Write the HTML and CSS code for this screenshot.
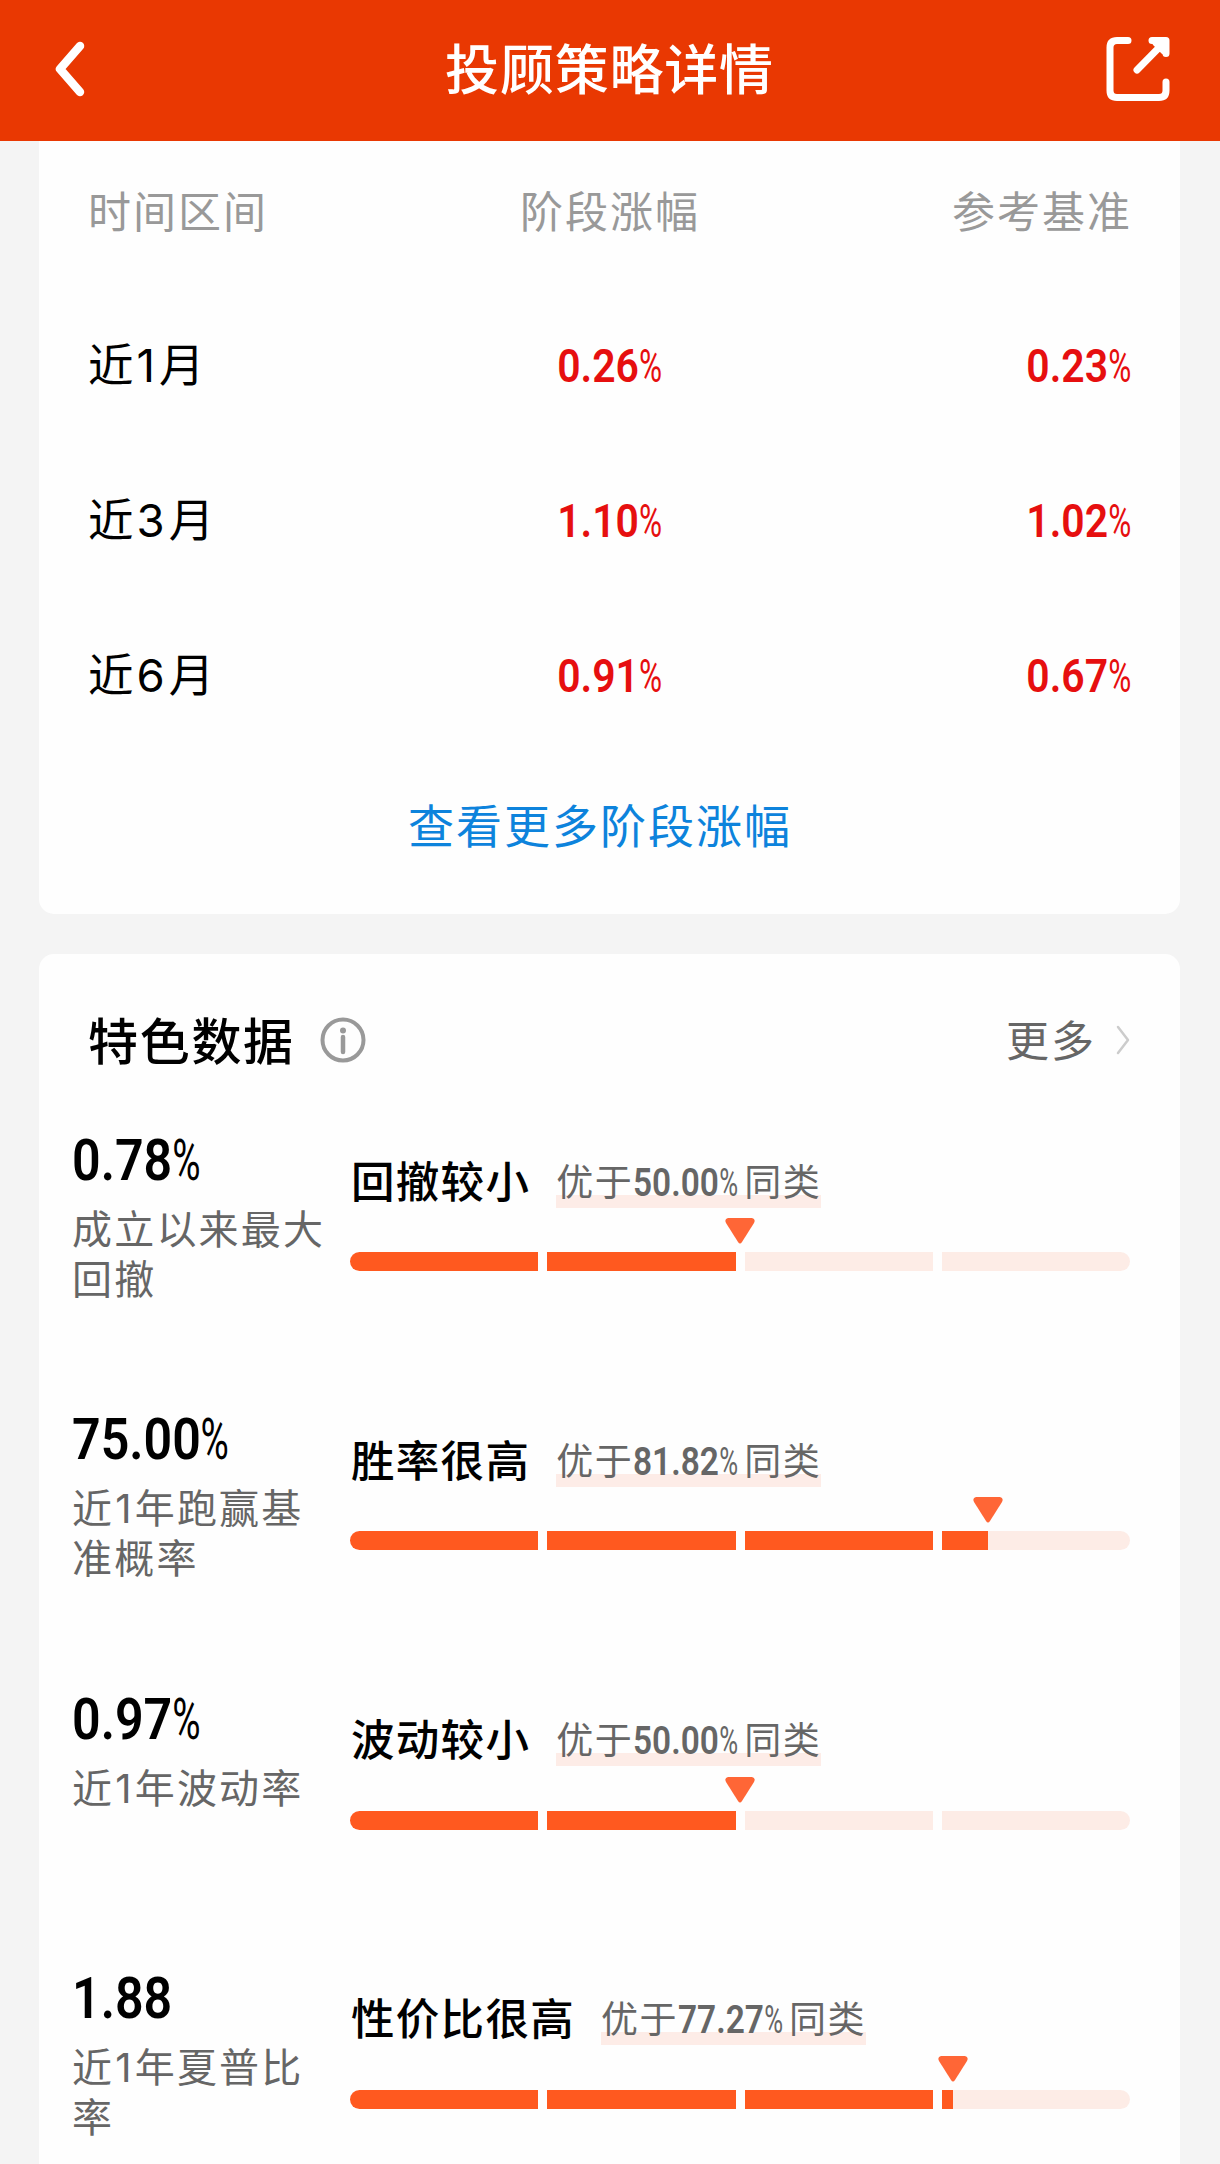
FILE: index.html
```html
<!DOCTYPE html>
<html lang="zh-CN">
<head>
<meta charset="utf-8">
<title>投顾策略详情</title>
<link rel="stylesheet" href="styles.css">
</head>
<body>
<header class="topbar">
  <svg class="back" width="34" height="60" viewBox="0 0 34 60"><path d="M28 7 8 30l20 23"/></svg>
  <h1 class="topbar-title">投顾策略详情</h1>
  <svg class="share" width="68" height="68" viewBox="0 0 68 68"><path d="M24 5.500H13q-7 0-7 7v43q0 7 7 7h42q7 0 7-7V47M48 5.500h14v13M60 7.500 33 35M52 8l8 8"/></svg>
</header>
<main>
  <section class="card returns">
    <div class="row head"><span>时间区间</span><span>阶段涨幅</span><span>参考基准</span></div>
    <div class="row"><span>近<i>1</i>月</span><span><b class="num">0.26<em>%</em></b></span><span><b class="num">0.23<em>%</em></b></span></div>
    <div class="row"><span>近<i>3</i>月</span><span><b class="num">1.10<em>%</em></b></span><span><b class="num">1.02<em>%</em></b></span></div>
    <div class="row"><span>近<i>6</i>月</span><span><b class="num">0.91<em>%</em></b></span><span><b class="num">0.67<em>%</em></b></span></div>
    <a class="more-link">查看更多阶段涨幅</a>
  </section>
  <section class="card features">
    <div class="section-head">
      <h2>特色数据</h2>
      <svg class="info" width="46" height="46" viewBox="0 0 46 46"><circle class="ring" cx="23" cy="23" r="20.5"/><circle class="dot" cx="23" cy="13.5" r="3"/><path d="M23 20v15"/></svg>
      <span class="more">更多</span>
      <svg class="chevron" width="16" height="32" viewBox="0 0 16 32"><path d="m3 3 10 13L3 29"/></svg>
    </div>
    <div class="metric">
      <div class="figure"><b class="num">0.78<em>%</em></b><p>成立以来最大回撤</p></div>
      <div class="rating">
        <div class="verdict"><h3>回撤较小</h3><span class="tag">优于<span class="tag-num"><b class="num">50.00<em>%</em></b></span>同类</span></div>
        <div class="bar"><svg class="marker" style="left:50%" width="30" height="26" viewBox="0 0 30 26"><path d="M3 0h24q4 1 2 5L17 24q-2 3-4 0L1 5Q-1 1 3 0Z"/></svg>
          <span><u style="width:100%"></u></span><span><u style="width:100%"></u></span><span></span><span></span></div>
      </div>
    </div>
    <div class="metric">
      <div class="figure"><b class="num">75.00<em>%</em></b><p>近<i>1</i>年跑赢基准概率</p></div>
      <div class="rating">
        <div class="verdict"><h3>胜率很高</h3><span class="tag">优于<span class="tag-num"><b class="num">81.82<em>%</em></b></span>同类</span></div>
        <div class="bar"><svg class="marker" style="left:81.82%" width="30" height="26" viewBox="0 0 30 26"><path d="M3 0h24q4 1 2 5L17 24q-2 3-4 0L1 5Q-1 1 3 0Z"/></svg>
          <span><u style="width:100%"></u></span><span><u style="width:100%"></u></span><span><u style="width:100%"></u></span><span><u style="width:24.5%"></u></span></div>
      </div>
    </div>
    <div class="metric">
      <div class="figure"><b class="num">0.97<em>%</em></b><p>近<i>1</i>年波动率</p></div>
      <div class="rating">
        <div class="verdict"><h3>波动较小</h3><span class="tag">优于<span class="tag-num"><b class="num">50.00<em>%</em></b></span>同类</span></div>
        <div class="bar"><svg class="marker" style="left:50%" width="30" height="26" viewBox="0 0 30 26"><path d="M3 0h24q4 1 2 5L17 24q-2 3-4 0L1 5Q-1 1 3 0Z"/></svg>
          <span><u style="width:100%"></u></span><span><u style="width:100%"></u></span><span></span><span></span></div>
      </div>
    </div>
    <div class="metric">
      <div class="figure"><b class="num">1.88</b><p>近<i>1</i>年夏普比率</p></div>
      <div class="rating">
        <div class="verdict"><h3>性价比很高</h3><span class="tag">优于<span class="tag-num"><b class="num">77.27<em>%</em></b></span>同类</span></div>
        <div class="bar"><svg class="marker" style="left:77.27%" width="30" height="26" viewBox="0 0 30 26"><path d="M3 0h24q4 1 2 5L17 24q-2 3-4 0L1 5Q-1 1 3 0Z"/></svg>
          <span><u style="width:100%"></u></span><span><u style="width:100%"></u></span><span><u style="width:100%"></u></span><span><u style="width:5.9%"></u></span></div>
      </div>
    </div>
  </section>
</main>
</body>
</html>
```
FILE: styles.css
```css
* { box-sizing: border-box; margin: 0; padding: 0; }
body {
  width: 1220px;
  height: 2164px;
  overflow: hidden;
  background: #f4f4f4;
  color: #000;
  font-family: "Noto Sans CJK SC", sans-serif;
}
h1, h2, h3 { font-weight: 500; }
svg { display: block; fill: none; flex: none; stroke-linecap: round; stroke-linejoin: round; }
i { font-family: Inter, sans-serif; font-style: normal; line-height: 1; }

.topbar {
  display: flex;
  align-items: center;
  justify-content: space-between;
  height: 141px;
  padding: 0 48px 3px 52px;
  background: #e93802;
  color: #fff;
}
.topbar svg { stroke: #fff; }
.back { stroke-width: 8.500; margin-right: 34px; }
.share { stroke-width: 7; }
.topbar-title { margin: -4px 5px 0 0; font-size: 54px; line-height: 80px; letter-spacing: .8px; }

.card { margin: 0 40px 0 39px; background: #fefefe; }

.num {
  display: inline-block;
  font-family: Roboto, sans-serif;
  font-weight: 600;
  transform: scaleX(.88);
  transform-origin: left;
  white-space: nowrap;
  letter-spacing: 0;
}
.num em {
  display: inline-block;
  font-style: normal;
  font-weight: 400;
  transform: scaleX(.77);
  transform-origin: left;
  margin-right: -.16em;
}

.returns { height: 773px; padding: 0 48px 0 49px; border-radius: 0 0 15px 15px; }
.row {
  display: grid;
  grid-template-columns: 1fr 1fr 1fr;
  align-items: center;
  height: 155px;
  padding-bottom: 6px;
  font-size: 45.5px;
  letter-spacing: 2px;
}
.row i { margin: 0 2px 0 1px; }
.row span:nth-child(2) { text-align: center; }
.row span:nth-child(3) { text-align: right; }
.row .num { font-size: 46.5px; color: #e60f0f; transform-origin: center; }
.row span:nth-child(3) .num { transform-origin: right; }
.row.head { height: 146px; padding-bottom: 11px; font-size: 43px; color: #999; }
.more-link {
  display: block;
  margin-top: 36px;
  padding-right: 20px;
  text-align: center;
  font-size: 46px;
  line-height: 70px;
  letter-spacing: 2px;
  color: #0d83dc;
}

.features { margin-top: 40px; height: 1230px; padding: 50px 49px 0 33px; border-radius: 15px 15px 0 0; }
.section-head { display: flex; align-items: center; height: 72px; padding-left: 16px; }
.section-head h2 { margin-top: -4px; font-size: 50px; line-height: 72px; letter-spacing: 1.7px; }
.info { margin-left: 25px; stroke: #999; stroke-width: 4.500; }
.info .ring { stroke-width: 4; }
.info .dot { fill: #999; stroke: none; }
.more { margin: -4px 0 0 auto; font-size: 43px; letter-spacing: 2px; color: #666; }
.chevron { margin-left: 19px; stroke: #ccc; stroke-width: 2.5; }

.metric { display: grid; grid-template-columns: 278px 780px; height: 279.3px; padding-top: 52px; }
.figure .num { font-size: 57px; line-height: 66px; display: block; }
.figure p { width: 262px; margin-top: 8px; font-size: 40px; line-height: 50px; letter-spacing: 2.2px; color: #666; }
.figure i { margin-left: 1px; margin-right: 1px; }
.rating { padding-top: 22px; }
.verdict { display: flex; align-items: center; height: 62px; padding-left: 1px; }
.verdict h3 { margin-top: -4px; font-size: 43.5px; letter-spacing: 1.3px; }
.tag {
  display: flex;
  margin-left: 26px;
  font-size: 37px;
  line-height: 56px;
  letter-spacing: 1.5px;
  color: #666;
  background: linear-gradient(#fdece7, #fdece7) 0 43px / 100% 13px no-repeat;
}
.tag-num { width: 111px; }
.tag .num { font-size: 38px; }
.bar { position: relative; display: grid; grid-template-columns: repeat(4, 1fr); gap: 9px; height: 19px; margin-top: 40px; }
.bar span { background: #fdece6; overflow: hidden; }
.bar span:first-of-type { border-radius: 10px 0 0 10px; }
.bar span:last-of-type { border-radius: 0 10px 10px 0; }
.bar u { display: block; height: 100%; background: #ff591f; }
.marker { position: absolute; top: -34px; margin-left: -15px; fill: #ff6636; }
```
